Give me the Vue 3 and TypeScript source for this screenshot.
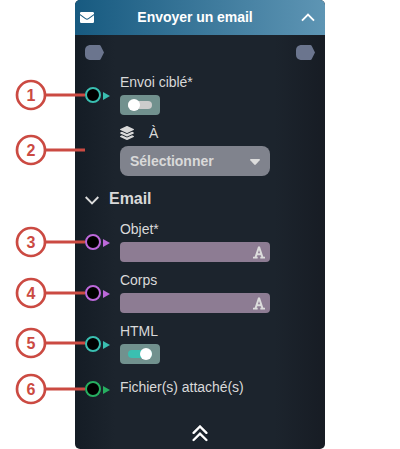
<script setup lang="ts">
interface Callout {
  label: number
  y: number
}

const callouts: Callout[] = [
  { label: 1, y: 95 },
  { label: 2, y: 150 },
  { label: 3, y: 242 },
  { label: 4, y: 293 },
  { label: 5, y: 343 },
  { label: 6, y: 389 },
]

const textFields: string[] = ['Objet*', 'Corps']
</script>

<template>
  <main class="canvas">
    <section class="node">
      <header class="header">
        <svg class="mail" width="14" height="11" viewBox="0 0 14 11">
          <path fill="#fff" d="M1.3 0h11.4Q14 0 14 1.3v.6L8.2 6.3Q7 7.2 5.8 6.3L0 1.9V1.3Q0 0 1.3 0zM0 3.2 5.2 7.1Q7 8.4 8.8 7.1L14 3.2V9.7Q14 11 12.7 11H1.3Q0 11 0 9.7z" />
        </svg>
        <h1>Envoyer un email</h1>
        <svg class="fold" width="14" height="9" viewBox="0 0 14 9">
          <path fill="none" stroke="#fff" stroke-width="1.9" d="M1 7.7 7 1.7l6 6" />
        </svg>
      </header>

      <div class="flow">
        <svg v-for="n in 2" :key="n" width="19" height="15" viewBox="0 0 19 15">
          <path fill="#6b758e" d="M4.5 0H14.5Q15.2 0 15.6.7L19 7.5 15.6 14.3Q15.2 15 14.5 15H4.5Q0 14 0 10V5Q0 1 4.5 0z" />
        </svg>
      </div>

      <div class="row teal">
        <div class="port"><i class="dot"></i><i class="arrow"></i></div>
        <div class="field">
          <label>Envoi ciblé*</label>
          <div class="toggle"><span class="track"><i class="knob"></i></span></div>
        </div>
      </div>

      <div class="target">
        <div class="target-label">
          <svg width="14" height="14" viewBox="0 0 512 512" fill="#d9d9d9">
            <path d="M12.400 148l232.900 105.700c6.800 3.100 14.500 3.100 21.300 0L499.500 148c16.600-7.500 16.600-32.500 0-40L266.600 2.300a25.600 25.600 0 0 0-21.300 0L12.400 108c-16.600 7.500-16.600 32.500 0 40z" />
            <path d="M499.600 236.300l-58.100-26.300-161.600 73.300a57.600 57.600 0 0 1-47.800 0L70.500 210l-58.100 26.300c-16.600 7.500-16.600 32.500 0 40l232.900 105.600c6.800 3.100 14.500 3.100 21.300 0l233-105.600c16.500-7.500 16.500-32.500 0-40z" />
            <path d="M499.600 364.100l-57.900-26.200-161.800 73.300a57.600 57.600 0 0 1-47.800 0L70.300 337.900l-57.900 26.200c-16.600 7.500-16.600 32.500 0 40l232.900 105.600c6.800 3.100 14.500 3.100 21.300 0l233-105.600c16.500-7.500 16.500-32.500 0-40z" />
          </svg>
          <span>À</span>
        </div>
        <div class="select">
          <span>Sélectionner</span>
          <svg width="10" height="6" viewBox="0 0 10 6">
            <path fill="#dcdcdc" d="M.7 0h8.600q1 .5.400 1.300L5.800 5.600q-.8.700-1.600 0L.3 1.300Q-.3.500.7 0z" />
          </svg>
        </div>
      </div>

      <div class="section">
        <svg width="14" height="9" viewBox="0 0 14 9">
          <path fill="none" stroke="#dcdcdc" stroke-width="1.9" d="M.7 1 7 7.300 13.300 1" />
        </svg>
        <h2>Email</h2>
      </div>

      <div v-for="name in textFields" :key="name" class="row purple">
        <div class="port"><i class="dot"></i><i class="arrow"></i></div>
        <div class="field">
          <label>{{ name }}</label>
          <div class="input">
            <svg width="12" height="13" viewBox="0 0 12 13" fill="none" stroke="#dcdcdc">
              <path stroke-width="2" d="M2.300 12 5.800 1.400h.4L9.700 12M3.300 8.200h5.400" />
              <path stroke-width="1.800" d="M0 11.700h4.700M7.300 11.700H12" />
            </svg>
          </div>
        </div>
      </div>

      <div class="row teal">
        <div class="port"><i class="dot"></i><i class="arrow"></i></div>
        <div class="field">
          <label>HTML</label>
          <div class="toggle on"><span class="track"><i class="knob"></i></span></div>
        </div>
      </div>

      <div class="row green last">
        <div class="port"><i class="dot"></i><i class="arrow"></i></div>
        <div class="field"><label>Fichier(s) attaché(s)</label></div>
      </div>

      <footer class="collapse">
        <svg width="16" height="17" viewBox="0 0 16 17">
          <path fill="none" stroke="#fff" stroke-width="2.400" stroke-linecap="round" stroke-linejoin="miter" d="M1.600 7.800 8 1.500l6.400 6.300M1.600 15 8 8.700l6.400 6.300" />
        </svg>
      </footer>
    </section>

    <svg class="callouts" width="86" height="449" viewBox="0 0 86 449">
      <g v-for="c in callouts" :key="c.label">
        <line x1="45" x2="85" :y1="c.y" :y2="c.y" stroke="#cb4a42" stroke-width="3" />
        <circle cx="31" :cy="c.y" r="14" fill="#fff" stroke="#cb4a42" stroke-width="2.700" />
        <text x="31" :y="c.y + 6" text-anchor="middle">{{ c.label }}</text>
      </g>
    </svg>
  </main>
</template>

<style>
body {
  background: #fff;
}
</style>

<style scoped>
.canvas {
  position: relative;
  width: 400px;
  height: 449px;
  overflow: hidden;
  font-family: "Liberation Sans", Arial, sans-serif;
  font-size: 14px;
  line-height: 16px;
  letter-spacing: -0.04px;
  color: #d9d9d9;
}

.node {
  display: flex;
  flex-direction: column;
  box-sizing: border-box;
  width: 250px;
  height: 449px;
  margin-left: 75px;
  border-radius: 5px;
  overflow: hidden;
  background: linear-gradient(90deg, #141c25 0, #1c242d 40px, #1c242d 200px, #171c24 100%);
}

.header {
  display: flex;
  flex: none;
  align-items: center;
  justify-content: space-between;
  box-sizing: border-box;
  height: 35px;
  padding: 0 10px 0 5px;
  background: linear-gradient(90deg, #175a80, #5e95b4);
}

h1,
h2 {
  margin: 0;
  font-weight: bold;
}

h1 {
  margin: 0 5px 2px 0;
  font-size: 14px;
  color: #fff;
}

.fold {
  margin-bottom: 1px;
}

.flow {
  display: flex;
  flex: none;
  justify-content: space-between;
  height: 15px;
  padding: 10px 10px 14px;
}

.row {
  display: grid;
  flex: none;
  grid-template-columns: 35px 150px;
  align-items: center;
  height: 41px;
  padding-left: 10px;
  margin-bottom: 10px;
}

.teal {
  --port: #3abfb1;
}

.purple {
  --port: #bd68da;
}

.green {
  --port: #27ae60;
}

.port {
  display: flex;
  align-items: center;
  gap: 2px;
}

.dot {
  box-sizing: border-box;
  width: 16px;
  height: 16px;
  border: 2px solid var(--port);
  border-radius: 50%;
  background: #000;
}

.arrow {
  margin-top: 2px;
  border-left: 7px solid var(--port);
  border-top: 4px solid transparent;
  border-bottom: 4px solid transparent;
}

.field {
  display: flex;
  flex-direction: column;
  gap: 5px;
}

.toggle {
  display: flex;
  align-items: center;
  justify-content: center;
  width: 40px;
  height: 20px;
  border-radius: 4px;
  background: #71918e;
}

.track {
  display: flex;
  align-items: center;
  width: 24px;
  height: 8px;
  border-radius: 4px;
  background: #ccc;
}

.knob {
  width: 12px;
  height: 12px;
  border-radius: 50%;
  background: #fff;
}

.on .track {
  justify-content: flex-end;
  background: #3abfb1;
}

.target {
  flex: none;
  width: 150px;
  margin-left: 45px;
}

.target-label {
  display: flex;
  align-items: center;
  gap: 15px;
  height: 16px;
  margin-bottom: 5px;
}

.select {
  display: flex;
  align-items: center;
  justify-content: space-between;
  box-sizing: border-box;
  height: 30px;
  padding: 0 10px;
  border-radius: 8px;
  background: #80838d;
  font-weight: bold;
}

.select svg {
  margin-top: 2px;
}

.section {
  display: flex;
  flex: none;
  align-items: center;
  gap: 10px;
  height: 20px;
  margin: 13px 0 12px 10px;
}

.section svg {
  margin-top: 2px;
}

h2 {
  font-size: 16px;
}

.input {
  display: flex;
  align-items: center;
  justify-content: flex-end;
  box-sizing: border-box;
  height: 20px;
  padding-right: 5px;
  border-radius: 4px;
  background: #8d7c93;
}

.last {
  height: 20px;
  margin-top: 5px;
}

.last label {
  margin-top: -4px;
}

.collapse {
  display: flex;
  justify-content: center;
  margin-top: auto;
  padding-bottom: 7px;
}

.collapse svg {
  display: block;
}

.callouts {
  position: absolute;
  top: 0;
  left: 0;
}

.callouts text {
  font-size: 16px;
  font-weight: bold;
  fill: #cb4a42;
}
</style>
